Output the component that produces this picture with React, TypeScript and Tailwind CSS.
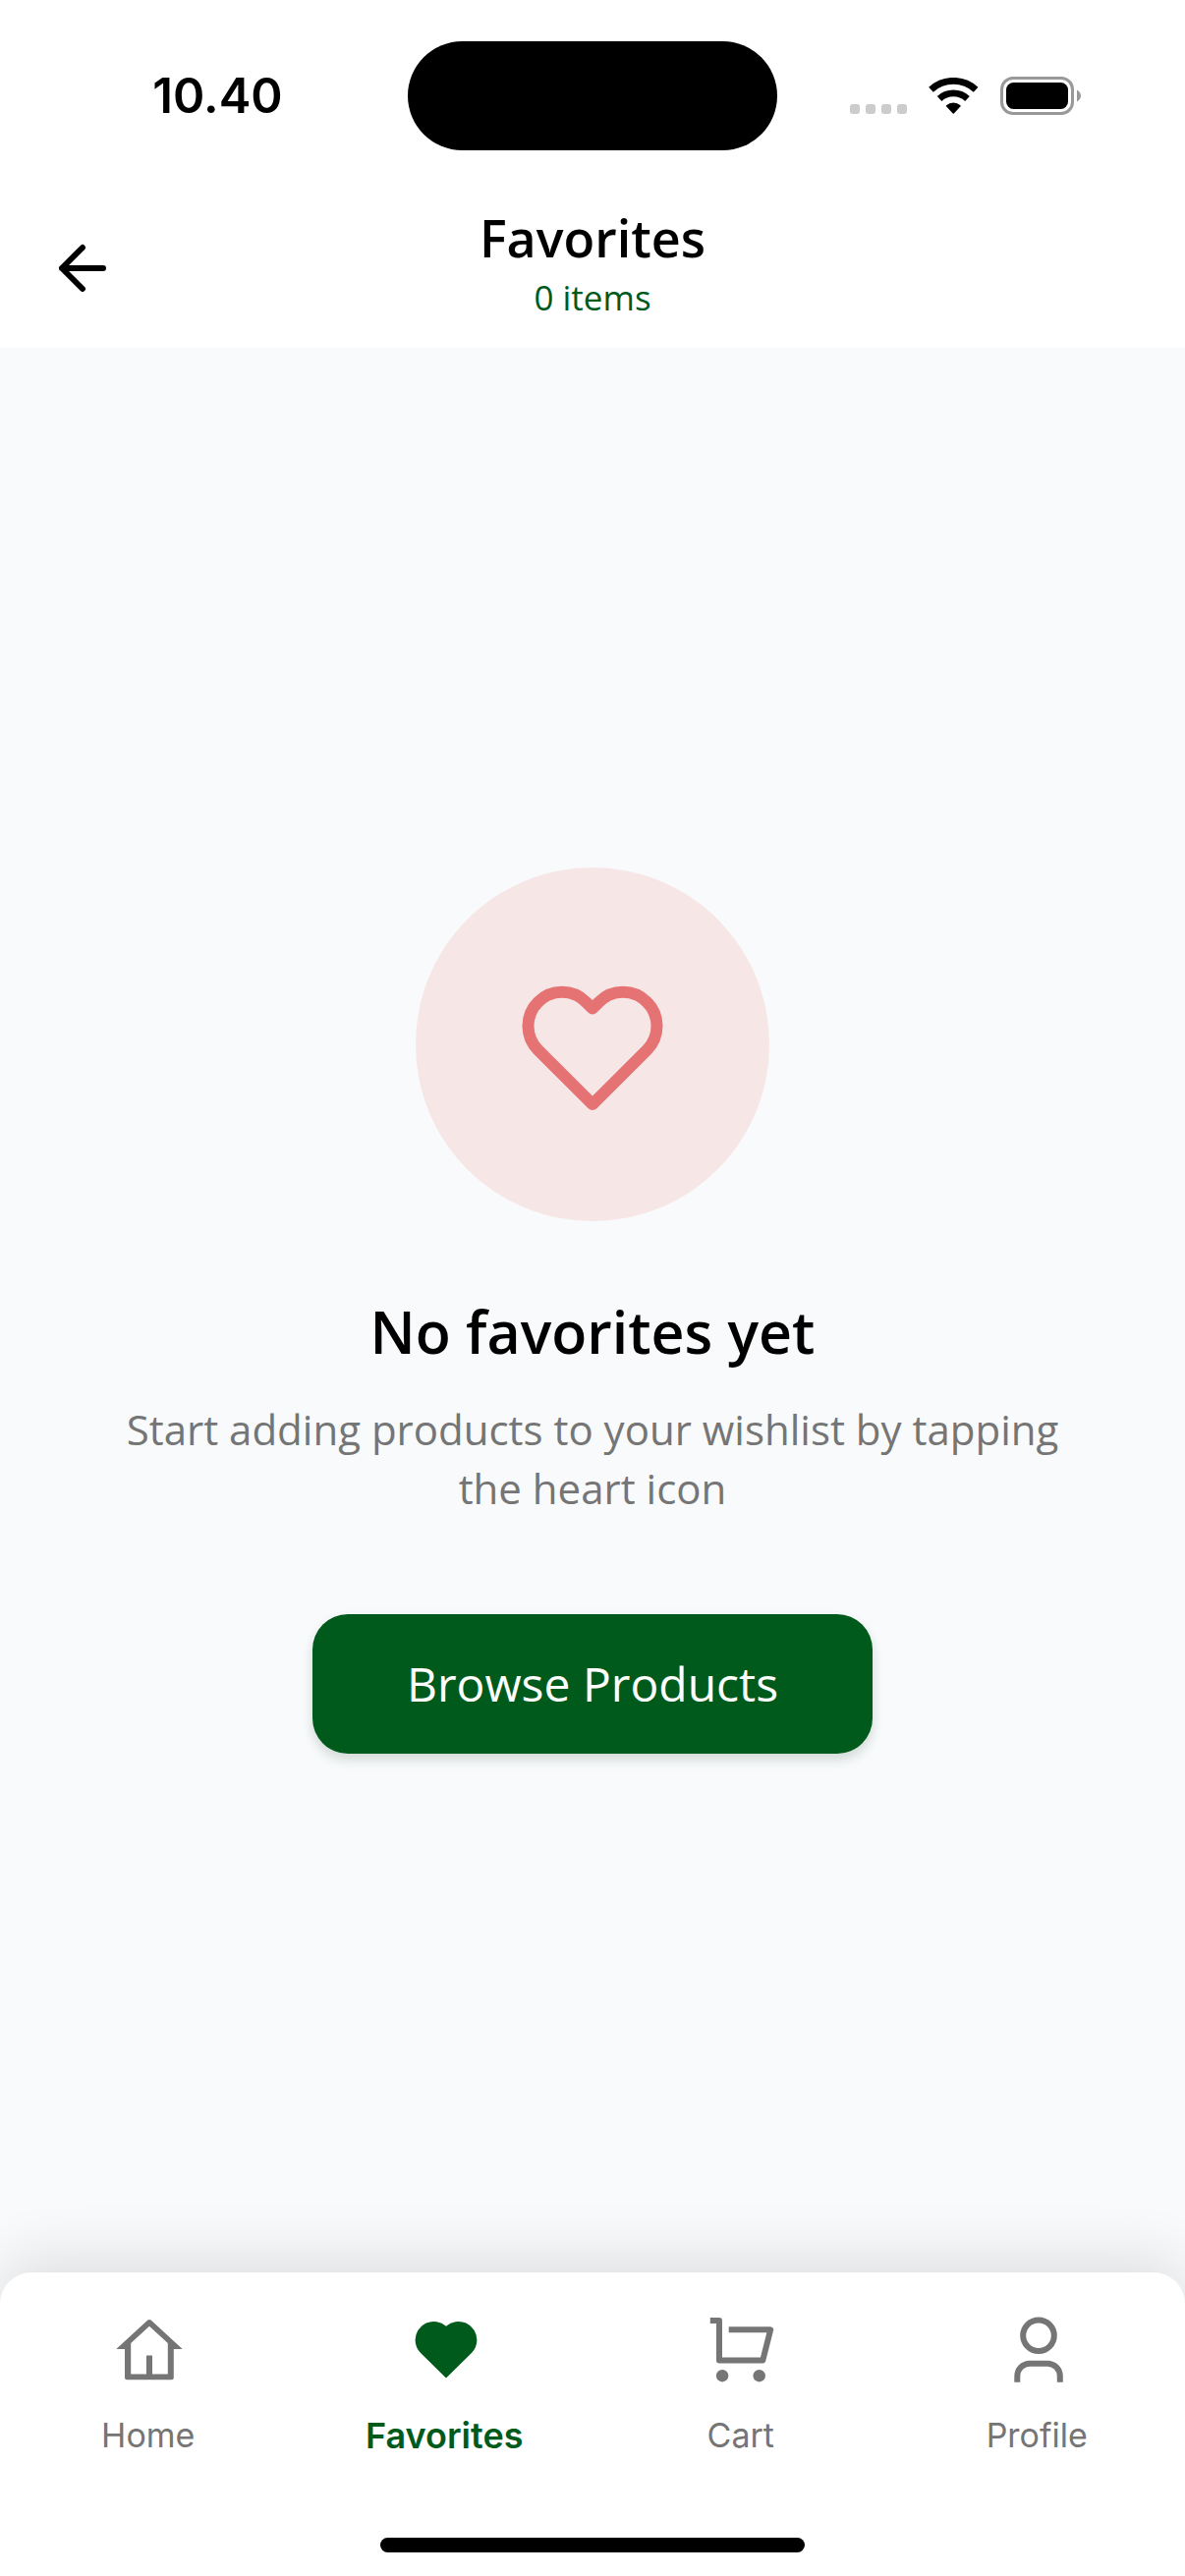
import type { ReactNode } from "react";

function StatusBar() {
  return (
    <div className="grid grid-cols-[1fr_376px_1fr] items-center bg-white pt-[42px] pb-[39px]">
      <span className="pl-7 text-center font-['Inter',sans-serif] text-[49px] leading-none font-semibold">
        10.40
      </span>
      <div className="h-[111px] rounded-full bg-black" />
      <div className="flex items-end justify-end pr-[106px]">
        <div className="mr-[21px] flex gap-[6px] pb-px">
          <i className="size-[10px] rounded-[3px] bg-[#cccccc]" />
          <i className="size-[10px] rounded-[3px] bg-[#cccccc]" />
          <i className="size-[10px] rounded-[3px] bg-[#cccccc]" />
          <i className="size-[10px] rounded-[3px] bg-[#cccccc]" />
        </div>
        <svg width="52" height="38" viewBox="0 0 52 38" className="mr-[22px]" aria-hidden="true">
          <path d="M3.5 12.2A33.7 33.7 0 0 1 49.1 12.2" fill="none" stroke="#000" strokeWidth="6.8" />
          <path d="M12.1 21.5A21 21 0 0 1 40.5 21.5" fill="none" stroke="#000" strokeWidth="6.8" />
          <path
            d="M26.3 36L19.6 28.7A10.3 10.3 0 0 1 33 28.7Z"
            stroke="#000"
            strokeWidth="1.5"
            strokeLinejoin="round"
          />
        </svg>
        <svg width="82" height="39" viewBox="0 0 82 39" aria-hidden="true">
          <rect x="1.5" y="1.5" width="72" height="36" rx="11.5" fill="none" stroke="#999" strokeWidth="3" />
          <rect x="6" y="6" width="63" height="27" rx="7.5" />
          <path d="M78 13.5Q82 16 82 19.5T78 25.5Z" fill="#999" />
        </svg>
      </div>
    </div>
  );
}

function Header() {
  return (
    <header className="grid grid-cols-[1fr_auto_1fr] items-center bg-white px-12 py-[14px]">
      <button type="button" aria-label="Back" className="size-[72px]">
        <svg
          width="72"
          height="72"
          viewBox="0 0 72 72"
          fill="none"
          stroke="currentColor"
          strokeWidth="6"
          strokeLinecap="round"
          strokeLinejoin="round"
          aria-hidden="true"
        >
          <path d="M36 15L15 36L36 57M15 36H57" />
        </svg>
      </button>
      <div className="pb-3 text-center">
        <h1 className="text-[52px] leading-[72px] font-semibold">Favorites</h1>
        <p className="text-[35px] leading-[50px] text-[#005a1c]">0 items</p>
      </div>
    </header>
  );
}

function EmptyState() {
  return (
    <main className="flex flex-1 flex-col items-center justify-center px-24">
      <div className="flex size-[360px] items-center justify-center rounded-full bg-[#f7e6e6]">
        <svg width="180" height="180" viewBox="0 0 180 180" aria-hidden="true">
          <path
            d="M90 53.5L83.4 46.9A34.5 34.5 0 1 0 34.6 95.7L90 151L145.4 95.7A34.5 34.5 0 1 0 96.6 46.9Z"
            fill="none"
            stroke="#e57373"
            strokeWidth="12"
            strokeLinejoin="round"
          />
        </svg>
      </div>
      <h2 className="mt-[70px] text-[59px] leading-[84px] font-semibold">No favorites yet</h2>
      <p className="mt-7 text-center text-[42px] leading-[60px] text-[#757575]">
        Start adding products to your wishlist by tapping the heart icon
      </p>
      <button
        type="button"
        className="mt-[98px] rounded-[36px] bg-[#005a1c] px-24 py-9 text-[48px] leading-[70px] text-white shadow-[0_6px_12px_rgba(0,50,16,0.16)]"
      >
        Browse Products
      </button>
    </main>
  );
}

const tabs: { label: string; active?: boolean; icon: ReactNode }[] = [
  {
    label: "Home",
    icon: (
      <path
        fill="currentColor"
        fillRule="evenodd"
        d="M37.4 6.6Q39 5.2 40.6 6.6L72.7 36H63.8V65.3Q63.8 67.3 61.8 67.3H16Q14 67.3 14 65.3V36H5.3ZM20.2 30V61.5H36V42.5H42V61.5H57.8V30L39 12.8Z"
      />
    ),
  },
  {
    label: "Favorites",
    active: true,
    icon: (
      <path
        fill="currentColor"
        d="M39 12.8A18.8 18.8 0 0 0 7.6 26.7A18.8 18.8 0 0 0 13.1 39.9L39 65.5L64.9 39.9A18.8 18.8 0 0 0 70.4 26.7A18.8 18.8 0 0 0 39 12.8Z"
      />
    ),
  },
  {
    label: "Cart",
    icon: (
      <>
        <path
          d="M6.8 7H16V47.4H60.3L68.2 16.3H25.7"
          fill="none"
          stroke="currentColor"
          strokeWidth="6"
          strokeLinejoin="round"
        />
        <circle cx="19.1" cy="63.2" r="6.2" fill="currentColor" />
        <circle cx="56.7" cy="63.2" r="6.2" fill="currentColor" />
      </>
    ),
  },
  {
    label: "Profile",
    icon: (
      <g fill="none" stroke="currentColor" strokeWidth="6">
        <circle cx="39" cy="22.3" r="15.8" />
        <path d="M17.3 69.7V63.5A12.8 12.8 0 0 1 30.1 50.7H48A12.8 12.8 0 0 1 60.8 63.5V69.7" />
      </g>
    ),
  },
];

function BottomNav() {
  return (
    <nav className="rounded-t-[32px] bg-white pt-[42px] pb-6 font-['Inter',sans-serif] shadow-[0_-15px_60px_rgba(0,0,0,0.11)]">
      <div className="grid grid-cols-4">
        {tabs.map((tab) => (
          <a
            key={tab.label}
            href="#"
            aria-current={tab.active ? "page" : undefined}
            className={`flex flex-col items-center gap-6 ${tab.active ? "text-[#005a1c]" : "text-[#757575]"}`}
          >
            <svg width="75" height="75" viewBox="0 0 75 75" aria-hidden="true">
              {tab.icon}
            </svg>
            <span className={`leading-[50px] ${tab.active ? "text-[36px] font-semibold" : "text-[34px]"}`}>
              {tab.label}
            </span>
          </a>
        ))}
      </div>
      <div className="mx-auto mt-[79px] h-[15px] w-[432px] rounded-full bg-black" />
    </nav>
  );
}

export default function App() {
  return (
    <div className="flex min-h-screen flex-col overflow-x-hidden bg-[#f8fafb] font-['Open_Sans','Noto_Sans',sans-serif] text-black">
      <StatusBar />
      <Header />
      <EmptyState />
      <BottomNav />
    </div>
  );
}
